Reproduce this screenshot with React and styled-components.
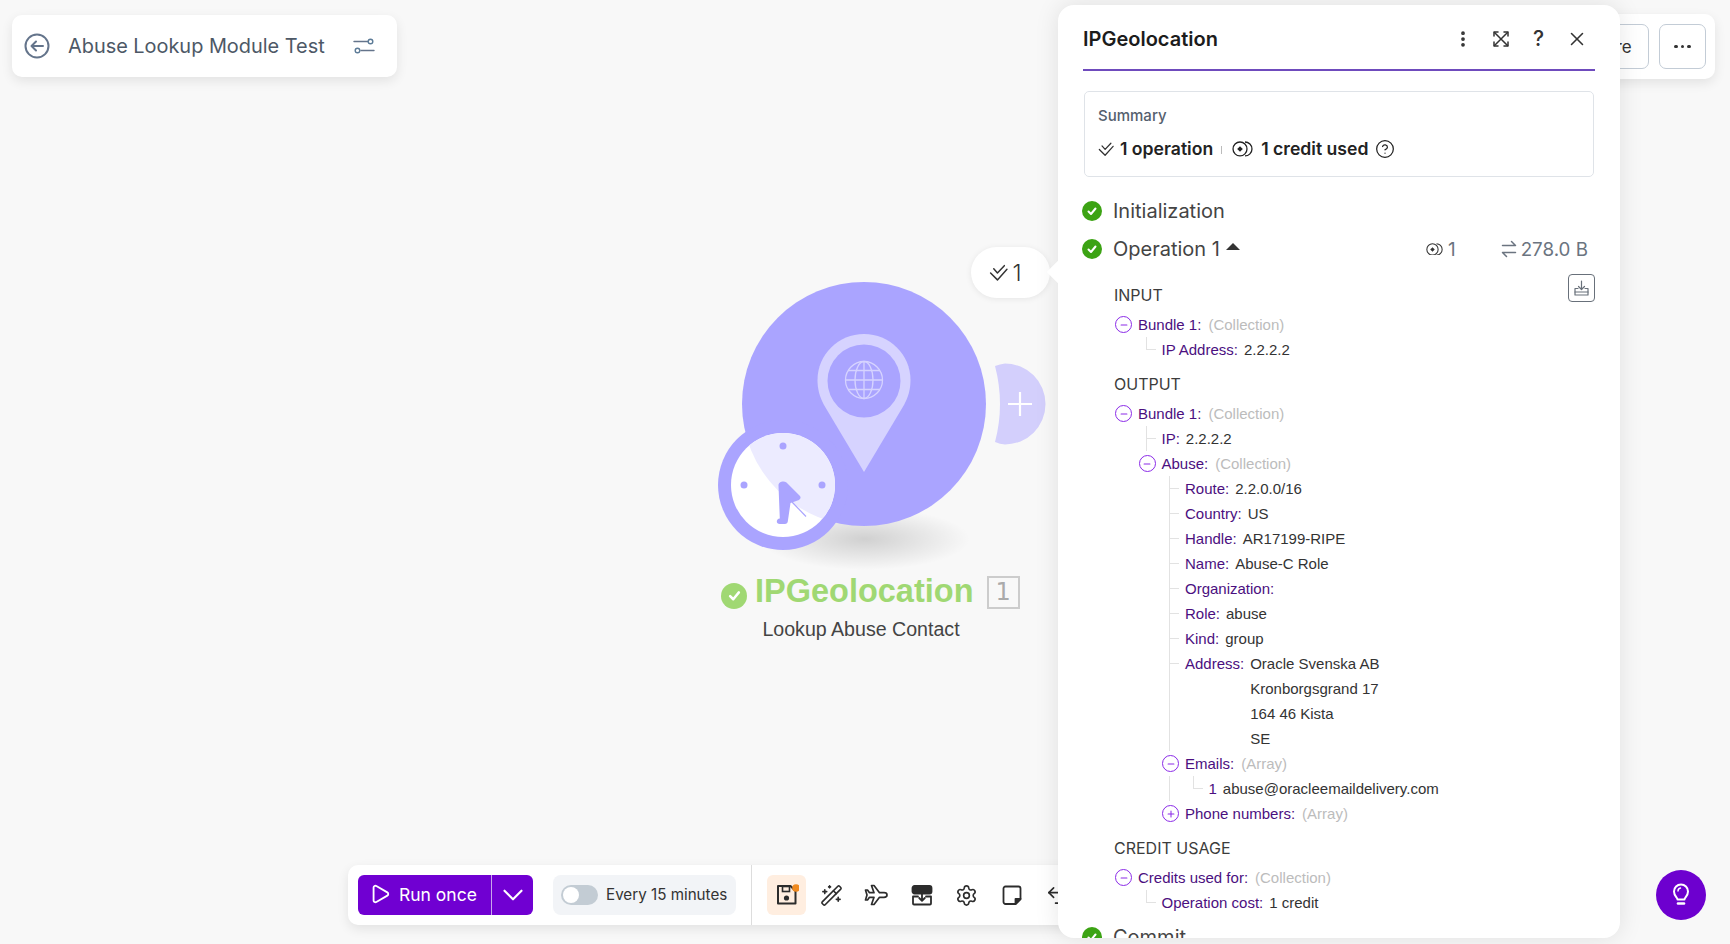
import React from 'react';
import styled, { createGlobalStyle } from 'styled-components';
import { ChevronDown, CircleHelp, EllipsisVertical, Minus, Play, Plus, Settings, Undo2, WandSparkles, X } from 'lucide-react';

const GlobalStyle = createGlobalStyle`
  html, body {
    margin: 0;
    height: 100%;
    overflow: hidden;
    background: #f8f8f8;
    font-family: Inter, "Liberation Sans", sans-serif;
  }
  * { box-sizing: border-box; }
`;

const Page = styled.div`
  position: relative;
  width: 1730px;
  height: 944px;
  overflow: hidden;
`;

const TitleCard = styled.div`
  position: absolute;
  left: 12px;
  top: 15px;
  width: 385px;
  height: 62px;
  padding: 0 22px 0 12px;
  display: flex;
  align-items: center;
  background: #fff;
  border-radius: 10px;
  box-shadow: 0 4px 12px rgba(0, 0, 0, 0.09);
  color: #5c6b7c;
`;

const ScenarioName = styled.div`
  flex: 1;
  margin-left: 18px;
  font-size: 19.9px;
  color: #4d5866;
  white-space: nowrap;
`;

const ActionsCard = styled.div`
  position: absolute;
  right: 15px;
  top: 14px;
  height: 65px;
  padding: 10px 9px 10px 10px;
  display: flex;
  gap: 10px;
  background: #fff;
  border-radius: 10px;
  box-shadow: 0 4px 12px rgba(0, 0, 0, 0.09);
`;

const OutlineButton = styled.button`
  height: 45px;
  width: ${(p) => p.$width}px;
  padding: 0;
  display: flex;
  align-items: center;
  justify-content: center;
  gap: 3px;
  background: #fff;
  border: 1px solid #c3ccd6;
  border-radius: 7px;
  font: 400 17px Inter, sans-serif;
  color: #333;
`;

const Dot = styled.span`
  width: 3.5px;
  height: 3.5px;
  border-radius: 50%;
  background: #333;
`;

const Canvas = styled.div`
  position: absolute;
  left: 0;
  top: 0;
  width: 1060px;
  height: 944px;
`;

const NodeShadow = styled.div`
  position: absolute;
  left: 760px;
  top: 508px;
  width: 210px;
  height: 62px;
  border-radius: 50%;
  background: radial-gradient(closest-side, rgba(0, 0, 0, 0.16), rgba(0, 0, 0, 0));
`;

const NodeArt = styled.svg`
  position: absolute;
  left: 700px;
  top: 270px;
`;

const NodeTitle = styled.div`
  position: absolute;
  left: 721px;
  top: 571px;
  height: 40px;
  display: flex;
  align-items: center;
  font: 700 32.5px/40px "Liberation Sans", sans-serif;
  color: #a0d873;
  white-space: nowrap;
`;

const NodeStatus = styled.span`
  width: 26px;
  height: 26px;
  margin: 9px 8px 0 0;
  display: flex;
  align-items: center;
  justify-content: center;
  border-radius: 50%;
  background: #a0d873;
`;

const NodeCount = styled.span`
  width: 33px;
  height: 33px;
  margin: 2px 0 0 13px;
  display: flex;
  align-items: center;
  justify-content: center;
  border: 2px solid #ccc;
  font: 400 24px "DejaVu Sans", sans-serif;
  color: #aaa;
`;

const NodeLabel = styled.div`
  position: absolute;
  left: 699px;
  top: 617px;
  width: 324px;
  text-align: center;
  font: 400 19.6px/24px "Liberation Sans", sans-serif;
  color: #444;
`;

const Bubble = styled.div`
  position: absolute;
  left: 971px;
  top: 247px;
  width: 79px;
  height: 51px;
  padding-right: 10px;
  display: flex;
  align-items: center;
  justify-content: center;
  gap: 4px;
  background: #fff;
  border-radius: 26px;
  box-shadow: 0 1px 6px rgba(0, 0, 0, 0.08);
  font-size: 23px;
  font-weight: 300;
  color: #333;
`;

const Toolbar = styled.div`
  position: absolute;
  left: 348px;
  top: 865px;
  width: 750px;
  height: 60px;
  padding: 0 10px;
  display: flex;
  align-items: center;
  background: #fff;
  border-radius: 10px;
  box-shadow: 0 4px 12px rgba(0, 0, 0, 0.09);
`;

const RunGroup = styled.div`
  width: 175px;
  height: 40px;
  display: flex;
  background: #7000d2;
  border-radius: 6px;
  color: #fff;
`;

const RunMain = styled.div`
  width: 134px;
  display: flex;
  align-items: center;
  padding: 0 0 2px 11px;
  gap: 8px;
  border-right: 1px solid #c9a6ec;
  font-size: 17.5px;
  white-space: nowrap;
`;

const RunCaret = styled.div`
  flex: 1;
  display: flex;
  align-items: center;
  justify-content: center;
`;

const SchedulePill = styled.div`
  width: 183px;
  height: 40px;
  margin-left: 20px;
  padding: 0 0 1px 8px;
  display: flex;
  align-items: center;
  gap: 8px;
  background: #f2f4f7;
  border-radius: 8px;
  font-size: 15.2px;
  color: #333;
  white-space: nowrap;
`;

const ToggleTrack = styled.span`
  width: 37px;
  height: 20px;
  padding: 2px;
  background: #c3ccd4;
  border-radius: 10px;
`;

const ToggleKnob = styled.span`
  display: block;
  width: 16px;
  height: 16px;
  border-radius: 50%;
  background: #fff;
`;

const ToolDivider = styled.div`
  width: 1px;
  height: 60px;
  margin: 0 15px;
  background: #ddd;
`;

const ToolButton = styled.div`
  width: ${(p) => (p.$active ? 39 : 45)}px;
  height: 40px;
  margin-left: ${(p) => (p.$active ? 0 : 3)}px;
  margin-right: ${(p) => (p.$active ? 0 : -3)}px;
  flex-shrink: 0;
  display: flex;
  align-items: center;
  justify-content: center;
  border-radius: 6px;
  background: ${(p) => (p.$active ? '#ffeee0' : 'transparent')};
  color: #2c2c2c;
`;

const HelpFab = styled.div`
  position: absolute;
  left: 1656px;
  top: 870px;
  width: 50px;
  height: 50px;
  display: flex;
  align-items: center;
  justify-content: center;
  border-radius: 50%;
  background: #6d00cf;
`;

const Panel = styled.aside`
  position: absolute;
  left: 1058px;
  top: 5px;
  width: 562px;
  height: 933px;
  padding: 0 25px;
  overflow: hidden;
  background: #fff;
  border-radius: 16px;
  box-shadow: 0 0 24px rgba(0, 0, 0, 0.1);
`;

const PanelArrow = styled.div`
  position: absolute;
  left: 1050px;
  top: 264px;
  width: 16px;
  height: 16px;
  background: #fff;
  transform: rotate(45deg);
`;

const PanelHeader = styled.header`
  height: 66px;
  display: flex;
  align-items: center;
  justify-content: space-between;
  padding-top: 3px;
  border-bottom: 2px solid #6f4bbd;
`;

const PanelTitle = styled.h2`
  margin: 0;
  font-size: 20px;
  font-weight: 600;
  color: #1c1c1c;
`;

const HeaderIcons = styled.div`
  display: flex;
  align-items: center;
  gap: 15px;
  margin-right: 7px;
`;

const HeaderIcon = styled.span`
  width: 23px;
  height: 23px;
  display: flex;
  align-items: center;
  justify-content: center;
  font-size: 21px;
  font-weight: 500;
  color: #333;
`;

const SummaryBox = styled.section`
  height: 86px;
  margin: 20px 1px 0;
  padding: 14px 13px;
  border: 1px solid #dfe3e8;
  border-radius: 5px;
`;

const SummaryTitle = styled.div`
  font-size: 15px;
  line-height: 20px;
  font-weight: 500;
  color: #55606e;
`;

const SummaryLine = styled.div`
  margin-top: 11px;
  display: flex;
  align-items: center;
  font-size: 17.6px;
  font-weight: 600;
  line-height: 24px;
  color: #222;
`;

const SummarySeparator = styled.span`
  width: 1px;
  height: 8px;
  margin: 2px 10px 0 8px;
  background: #bbb;
`;

const Stages = styled.div`
  margin-top: 15px;
`;

const StageRow = styled.div`
  height: 38px;
  display: flex;
  align-items: center;
  font-size: 20px;
  color: #444;
`;

const StageCheck = styled.span`
  width: 20px;
  height: 20px;
  margin: 0 11px 0 -1px;
  display: flex;
  align-items: center;
  justify-content: center;
  border-radius: 50%;
  background: #3ca314;
`;

const Caret = styled.span`
  width: 0;
  height: 0;
  margin: 0 0 5px 6px;
  border-left: 7px solid transparent;
  border-right: 7px solid transparent;
  border-bottom: 7px solid #333;
`;

const StageStats = styled.div`
  margin-left: auto;
  margin-right: 7px;
  display: flex;
  align-items: center;
  font-size: 18.8px;
  color: #6b7480;
`;

const Spaced = styled.span`
  display: flex;
  margin-left: ${(p) => p.$gap}px;
`;

const Groups = styled.div`
  position: relative;
  padding: 16px 0 3px 31px;
`;

const GroupHead = styled.div`
  margin-top: ${(p) => (p.$first ? 0 : 11)}px;
  margin-bottom: 6px;
  font-size: 16px;
  line-height: 22px;
  color: #3c3c3c;
`;

const DownloadButton = styled.div`
  position: absolute;
  right: 0;
  top: 6px;
  width: 27px;
  height: 28px;
  display: flex;
  align-items: center;
  justify-content: center;
  border: 1px solid #68707a;
  border-radius: 4px;
  color: #68707a;
`;

const Row = styled.div`
  position: relative;
  min-height: 25px;
  margin-left: ${(p) => p.$level * 23.5}px;
  padding-left: 24px;
  display: flex;
  gap: 6px;
  font: 400 15px/25px "Liberation Sans", sans-serif;
  color: #333;
`;

const LeafLines = styled.span`
  position: absolute;
  left: 8px;
  top: 0;
  bottom: ${(p) => (p.$last ? '50%' : '0')};
  width: 9px;
  border-left: 1px solid #e2e2e2;
  &::after {
    content: '';
    position: absolute;
    left: 0;
    ${(p) => (p.$last ? 'bottom: 0;' : 'top: 12px;')}
    width: 9px;
    border-top: 1px solid #e2e2e2;
  }
`;

const OuterLine = styled.span`
  position: absolute;
  left: -15.5px;
  top: 0;
  bottom: 0;
  border-left: 1px solid #e2e2e2;
`;

const ToggleCircle = styled.span`
  position: absolute;
  left: 1px;
  top: 4px;
  width: 17px;
  height: 17px;
  display: flex;
  align-items: center;
  justify-content: center;
  border: 1.5px solid #8b2be8;
  border-radius: 50%;
  color: #8b2be8;
`;

const Label = styled.span`
  color: #4b0f80;
  white-space: nowrap;
`;

const TypeName = styled.span`
  margin-left: 1px;
  color: #bcbcbc;
`;

const Lines = styled.span`
  display: flex;
  flex-direction: column;
`;

const DoubleCheck = ({ size = 18, color = '#333' }) => (
  <svg width={size} height={size} viewBox="0 0 18 18" fill="none" stroke={color} strokeWidth="1.4" strokeLinecap="round" strokeLinejoin="round">
    <path d="M1.5 9.5L8 16L17 6" />
    <path d="M4.5 5.5L8 9.5L14.5 2.5" />
  </svg>
);

const CoinEye = ({ size = 21, color = '#222' }) => (
  <svg width={size} height={size * 0.76} viewBox="0 0 21 16" fill="none" stroke={color} strokeWidth="1.3">
    <circle cx="8" cy="8" r="7" />
    <path d="M13 1a7 7 0 0 1 0 14" />
    <path d="M8 5.2L10.8 8L8 10.8L5.2 8z" fill={color} stroke="none" />
  </svg>
);

const CheckMark = ({ size = 12 }) => (
  <svg width={size} height={size} viewBox="0 0 12 12" fill="none" stroke="#fff" strokeWidth="2" strokeLinecap="round" strokeLinejoin="round">
    <path d="M2.5 6.5L5 9L9.5 3.5" />
  </svg>
);

const Expand = () => (
  <svg width="18" height="18" viewBox="0 0 18 18" fill="none" stroke="#333" strokeWidth="1.5" strokeLinecap="round" strokeLinejoin="round">
    <path d="M2 6V2h4M12 2h4v4M16 12v4h-4M6 16H2v-4" />
    <path d="M2.5 2.5l13 13M15.5 2.5l-13 13" />
  </svg>
);

const SwapIcon = () => (
  <svg width="16" height="18" viewBox="0 0 16 18" fill="none" stroke="currentColor" strokeWidth="1.5" strokeLinecap="round" strokeLinejoin="round">
    <path d="M1.5 5.5H14.5L10.5 1.5" />
    <path d="M14.5 12.5H1.5L5.5 16.5" />
  </svg>
);

const SlidersIcon = () => (
  <svg width="22" height="18" viewBox="0 0 22 18" fill="none" stroke="#64748b" strokeWidth="1.4" strokeLinecap="round">
    <path d="M1 4.5h14M8 13.5h13" />
    <circle cx="17.5" cy="4.5" r="2.3" stroke="#5c7b97" />
    <circle cx="4.5" cy="13.5" r="2.3" stroke="#5c7b97" />
  </svg>
);

const ArrowBack = () => (
  <svg width="26" height="26" viewBox="0 0 26 26" fill="none" stroke="#64748b" strokeWidth="2" strokeLinecap="round" strokeLinejoin="round">
    <circle cx="13" cy="13" r="11.5" />
    <path d="M19 13H7.5M12 8.5L7.5 13l4.5 4.5" />
  </svg>
);

const DownloadTray = () => (
  <svg width="17" height="17" viewBox="0 0 17 17" fill="none" stroke="currentColor" strokeWidth="1.2" strokeLinecap="round" strokeLinejoin="round">
    <path d="M8.5 1v8.5M5.5 6.5l3 3 3-3" />
    <path d="M5 8.500H2v6.500h13V8.500H12" />
    <path d="M2 12h13" />
  </svg>
);

const FloppyIcon = () => (
  <svg width="24" height="26" viewBox="0 0 24 26">
    <path d="M3 4h12.5l5 5v12.5H3z" fill="none" stroke="#2c2c2c" strokeWidth="2" strokeLinejoin="round" />
    <rect x="7.5" y="4.5" width="7" height="5" fill="none" stroke="#2c2c2c" strokeWidth="1.6" />
    <circle cx="11.5" cy="16" r="2.6" fill="#2c2c2c" />
    <circle cx="21" cy="6" r="3.8" fill="#f08a1f" />
  </svg>
);

const PlaneIcon = () => (
  <svg width="25" height="24" viewBox="0 0 24 24" fill="none" stroke="#2c2c2c" strokeWidth="1.7" strokeLinejoin="round">
    <path d="M22.5 12c0-1.300-1.500-2.300-3-2.300H15L9.500 2.500H7l2.500 7.200H5L3 7H1l1.500 5L1 17h2l2-2.700h4.500L7 21.500h2.500l5.500-7.200h4.500c1.500 0 3-1 3-2.300z" />
  </svg>
);

const AlignIcon = () => (
  <svg width="24" height="24" viewBox="0 0 24 24" fill="none" stroke="#2c2c2c" strokeWidth="1.8" strokeLinecap="round" strokeLinejoin="round">
    <rect x="2.5" y="3" width="19" height="7.5" rx="2" fill="#2c2c2c" />
    <path d="M8 13.5H3v7a1 1 0 0 0 1 1h16a1 1 0 0 0 1-1v-7h-5" />
    <path d="M12 11v6.500M9.200 15l2.800 2.800 2.800-2.800" />
  </svg>
);

const NoteIcon = () => (
  <svg width="22" height="22" viewBox="0 0 22 22" fill="none" stroke="#2c2c2c" strokeWidth="1.8" strokeLinejoin="round">
    <path d="M4.5 2.5h13a2 2 0 0 1 2 2V15l-5 5H4.500a2 2 0 0 1-2-2V4.500a2 2 0 0 1 2-2z" />
    <path d="M19.5 15h-5v5z" fill="#2c2c2c" />
  </svg>
);

const BulbIcon = () => (
  <svg width="20" height="24" viewBox="0 0 20 24" fill="none" stroke="#fff" strokeWidth="2" strokeLinecap="round" strokeLinejoin="round">
    <path d="M6.5 16.5c0-2-3.500-3.500-3.500-8a7 7 0 0 1 14 0c0 4.500-3.500 6-3.500 8z" />
    <path d="M7 8a3 3 0 0 1 2.500-3" strokeWidth="1.4" />
    <path d="M7 20.500h6" strokeWidth="2.6" />
  </svg>
);

const NodeDrawing = () => (
  <NodeArt width="350" height="300" viewBox="700 270 350 300">
    <defs>
      <clipPath id="faceClip">
        <circle cx="783" cy="485" r="52" />
      </clipPath>
    </defs>
    <path d="M995 366q5-2 10-2.500a40.500 40.500 0 0 1 0 81q-5-.5-10-2.500q10-38 0-76z" fill="#d3cffc" />
    <path d="M1020 392v24M1008 404h24" stroke="#fff" strokeWidth="2.2" />
    <circle cx="864" cy="404" r="122" fill="#aaa4ff" />
    <path d="M864 334c25.500 0 46.500 20.500 46.500 46 0 9-2 16.500-6.500 25l-40 67-40-67c-4.500-8.500-6.500-16-6.500-25 0-25.500 21-46 46.500-46z" fill="#d6d3ff" />
    <circle cx="864" cy="381" r="36.5" fill="#aaa4ff" />
    <g fill="none" stroke="#d6d3ff" strokeWidth="1.3">
      <circle cx="864" cy="380" r="18.5" />
      <ellipse cx="864" cy="380" rx="9" ry="18.5" />
      <path d="M864 361.500v37M845.500 380h37M848 370.500h32M848 389.500h32" />
    </g>
    <circle cx="783" cy="485" r="65" fill="#aaa4ff" />
    <circle cx="783" cy="485" r="52" fill="#fff" />
    <circle cx="864" cy="404" r="122" fill="#ecebff" clipPath="url(#faceClip)" />
    <g fill="#aaa4ff">
      <circle cx="783" cy="446" r="3.5" />
      <circle cx="744" cy="485" r="3.5" />
      <circle cx="822" cy="485" r="3.5" />
      <path d="M778.500 485.500c-.5-3.500 5-5.500 8-3l13 13c1.500 1.500 1.500 3-.5 4.500l-8.500 3-2.700 18.500c-.3 1.500-1 2.500-3 2.500h-5c-2 0-3-1-3-2.500s1-3 3-3z" />
    </g>
    <path d="M792 502l14 14.500" stroke="#aaa4ff" strokeWidth="1.2" />
  </NodeArt>
);

const Leaf = ({ level, last, outer, label, children }) => (
  <Row $level={level}>
    {outer && <OuterLine />}
    <LeafLines $last={last} />
    <Label>{label}</Label>
    {children}
  </Row>
);

const Branch = ({ level, label, type, open = true }) => (
  <Row $level={level}>
    <ToggleCircle>{open ? <Minus size={10} strokeWidth={2.5} /> : <Plus size={10} strokeWidth={2.5} />}</ToggleCircle>
    <Label>{label}</Label>
    <TypeName>{type}</TypeName>
  </Row>
);

const abuseFields = [
  ['Route:', '2.2.0.0/16'],
  ['Country:', 'US'],
  ['Handle:', 'AR17199-RIPE'],
  ['Name:', 'Abuse-C Role'],
  ['Organization:', ''],
  ['Role:', 'abuse'],
  ['Kind:', 'group'],
];

const addressLines = ['Oracle Svenska AB', 'Kronborgsgrand 17', '164 46 Kista', 'SE'];

const App = () => {
  return (
    <Page>
      <GlobalStyle />
      <Canvas>
        <NodeShadow />
        <NodeDrawing />
        <NodeTitle>
          <NodeStatus><CheckMark size={15} /></NodeStatus>
          IPGeolocation
          <NodeCount>1</NodeCount>
        </NodeTitle>
        <NodeLabel>Lookup Abuse Contact</NodeLabel>
        <Bubble><DoubleCheck size={19} />1</Bubble>
      </Canvas>

      <TitleCard>
        <ArrowBack />
        <ScenarioName>Abuse Lookup Module Test</ScenarioName>
        <SlidersIcon />
      </TitleCard>

      <ActionsCard>
        <OutlineButton $width={81}>Share</OutlineButton>
        <OutlineButton $width={47}><Dot /><Dot /><Dot /></OutlineButton>
      </ActionsCard>

      <Toolbar>
        <RunGroup>
          <RunMain><Play size={22} strokeWidth={2} />Run once</RunMain>
          <RunCaret><ChevronDown size={34} strokeWidth={1.5} /></RunCaret>
        </RunGroup>
        <SchedulePill>
          <ToggleTrack><ToggleKnob /></ToggleTrack>
          Every 15 minutes
        </SchedulePill>
        <ToolDivider />
        <ToolButton $active><FloppyIcon /></ToolButton>
        <ToolButton><WandSparkles size={23} strokeWidth={1.7} /></ToolButton>
        <ToolButton><PlaneIcon /></ToolButton>
        <ToolButton><AlignIcon /></ToolButton>
        <ToolButton><Settings size={23} strokeWidth={1.7} /></ToolButton>
        <ToolButton><NoteIcon /></ToolButton>
        <ToolButton><Undo2 size={23} strokeWidth={1.7} /></ToolButton>
      </Toolbar>

      <HelpFab><BulbIcon /></HelpFab>

      <Panel>
        <PanelHeader>
          <PanelTitle>IPGeolocation</PanelTitle>
          <HeaderIcons>
            <HeaderIcon><EllipsisVertical size={20} strokeWidth={2.5} /></HeaderIcon>
            <HeaderIcon><Expand /></HeaderIcon>
            <HeaderIcon>?</HeaderIcon>
            <HeaderIcon><X size={22} strokeWidth={1.7} /></HeaderIcon>
          </HeaderIcons>
        </PanelHeader>

        <SummaryBox>
          <SummaryTitle>Summary</SummaryTitle>
          <SummaryLine>
            <DoubleCheck size={16} />
            <Spaced $gap={6}>1 operation</Spaced>
            <SummarySeparator />
            <CoinEye />
            <Spaced $gap={8}>1 credit used</Spaced>
            <Spaced $gap={7}><CircleHelp size={20} strokeWidth={1.5} /></Spaced>
          </SummaryLine>
        </SummaryBox>

        <Stages>
          <StageRow><StageCheck><CheckMark /></StageCheck>Initialization</StageRow>
          <StageRow>
            <StageCheck><CheckMark /></StageCheck>Operation 1<Caret />
            <StageStats>
              <CoinEye size={17} color="#333" />
              <Spaced $gap={5}>1</Spaced>
              <Spaced $gap={45}><SwapIcon /></Spaced>
              <Spaced $gap={4}>278.0 B</Spaced>
            </StageStats>
          </StageRow>

          <Groups>
            <DownloadButton><DownloadTray /></DownloadButton>
            <GroupHead $first>INPUT</GroupHead>
            <Branch level={0} label="Bundle 1:" type="(Collection)" />
            <Leaf level={1} last label="IP Address:">2.2.2.2</Leaf>

            <GroupHead>OUTPUT</GroupHead>
            <Branch level={0} label="Bundle 1:" type="(Collection)" />
            <Leaf level={1} label="IP:">2.2.2.2</Leaf>
            <Branch level={1} label="Abuse:" type="(Collection)" />
            {abuseFields.map(([label, value]) => (
              <Leaf key={label} level={2} label={label}>{value}</Leaf>
            ))}
            <Leaf level={2} label="Address:">
              <Lines>{addressLines.map((line) => <span key={line}>{line}</span>)}</Lines>
            </Leaf>
            <Branch level={2} label="Emails:" type="(Array)" />
            <Leaf level={3} last outer label="1">abuse@oracleemaildelivery.com</Leaf>
            <Branch level={2} label="Phone numbers:" type="(Array)" open={false} />

            <GroupHead>CREDIT USAGE</GroupHead>
            <Branch level={0} label="Credits used for:" type="(Collection)" />
            <Leaf level={1} last label="Operation cost:">1 credit</Leaf>
          </Groups>
          <StageRow><StageCheck><CheckMark /></StageCheck>Commit</StageRow>
        </Stages>
      </Panel>
      <PanelArrow />
    </Page>
  );
};

export default App;
